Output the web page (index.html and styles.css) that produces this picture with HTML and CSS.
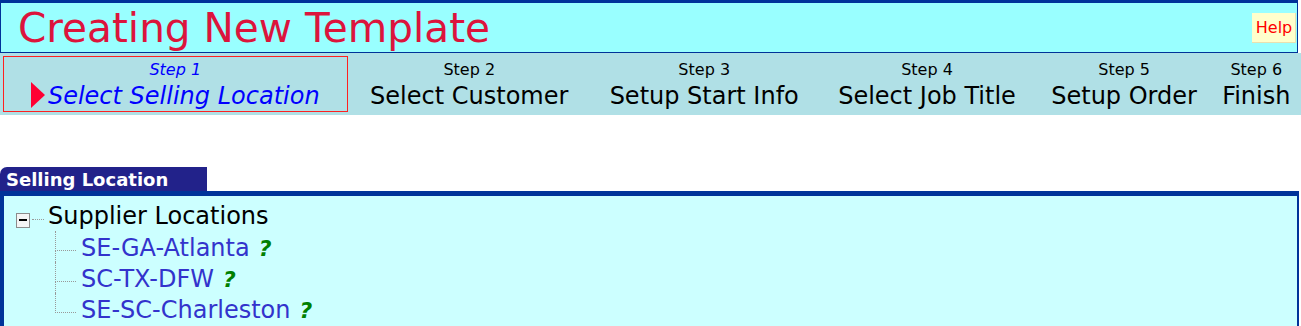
FILE: index.html
```html
<!DOCTYPE html>
<html>
<head>
<meta charset="utf-8">
<title>Creating New Template</title>
<link rel="stylesheet" href="styles.css">
</head>
<body>
<div class="header">
  <div class="title">Creating New Template</div>
  <div class="help">Help</div>
</div>
<table class="steps">
  <tr>
    <td class="step current">
      <div class="num">Step 1</div>
      <div class="label"><span class="arrow"></span>Select Selling Location</div>
    </td>
    <td class="step">
      <div class="num">Step 2</div>
      <div class="label">Select Customer</div>
    </td>
    <td class="step">
      <div class="num">Step 3</div>
      <div class="label">Setup Start Info</div>
    </td>
    <td class="step">
      <div class="num">Step 4</div>
      <div class="label">Select Job Title</div>
    </td>
    <td class="step">
      <div class="num">Step 5</div>
      <div class="label">Setup Order</div>
    </td>
    <td class="step">
      <div class="num">Step 6</div>
      <div class="label">Finish</div>
    </td>
  </tr>
</table>
<div class="section">
  <div class="tab">Selling Location</div>
  <div class="panel">
    <div class="tree-root">
      <span class="toggle"></span><span class="root-dots"></span><span class="root-label">Supplier Locations</span>
    </div>
    <ul class="children">
      <li class="child"><span class="link">SE-GA-Atlanta</span><span class="q">?</span></li>
      <li class="child"><span class="link">SC-TX-DFW</span><span class="q">?</span></li>
      <li class="child last"><span class="link">SE-SC-Charleston</span><span class="q">?</span></li>
    </ul>
  </div>
</div>
</body>
</html>
```
FILE: styles.css
```css
html, body {
  margin: 0;
  padding: 0;
  background: #ffffff;
  font-family: "DejaVu Sans", Verdana, sans-serif;
}

.header {
  width: 1296px;
  height: 49px;
  background: #99ffff;
  border-top: 3px solid #003399;
  border-left: 1px solid #003399;
  border-right: 1px solid #003399;
  border-bottom: 1px solid #003399;
  display: flex;
  justify-content: space-between;
  align-items: flex-start;
}

.title {
  color: #dc143c;
  font-size: 40.6px;
  line-height: 47px;
  padding-top: 2px;
  padding-left: 17px;
  white-space: nowrap;
}

.help {
  margin-top: 10px;
  margin-right: 1px;
  width: 44px;
  height: 30px;
  line-height: 30px;
  text-align: center;
  background: #ffffcc;
  color: #ff0000;
  font-size: 16px;
  box-shadow: inset -1px -1px 0 #e8e0b0;
}

.steps {
  width: 100%;
  background: #b0e0e6;
  border-spacing: 3px;
}

.step {
  text-align: center;
  vertical-align: top;
  white-space: nowrap;
  padding: 3px 0 1px 0;
  border: 1px solid transparent;
  color: #000000;
}

.step .num {
  font-size: 16px;
  line-height: 19px;
}

.step .label {
  font-size: 24px;
  line-height: 28px;
  margin-top: 3px;
}

.step.current {
  border: 1px solid #ff2020;
  outline: 1px solid #ff2020;
  outline-offset: -1px;
  color: #0000ff;
  font-style: italic;
}

.arrow {
  display: inline-block;
  width: 0;
  height: 0;
  border-left: 14px solid #ff0033;
  border-top: 13.5px solid transparent;
  border-bottom: 13.5px solid transparent;
  vertical-align: -4px;
  margin-right: 3px;
}

.section {
  margin-top: 52px;
}

.tab {
  width: 201px;
  height: 24px;
  line-height: 25px;
  padding-left: 6px;
  background: #22228a;
  color: #ffffff;
  font-weight: bold;
  font-size: 18px;
  border-top-left-radius: 7px;
  white-space: nowrap;
}

.panel {
  width: 1293px;
  height: 200px;
  background: #ccffff;
  border-top: 5px solid #003399;
  border-left: 4px solid #003399;
  border-right: 2px solid #003399;
  padding-top: 4px;
}

.tree-root {
  display: flex;
  align-items: center;
  height: 31px;
  padding-left: 12px;
}

.toggle {
  position: relative;
  width: 12px;
  height: 13px;
  border: 1px solid #8c8c8c;
  background: #f4f4f4;
  margin-top: 10px;
  flex: none;
}

.toggle::after {
  content: "";
  position: absolute;
  left: 2px;
  top: 5px;
  width: 8px;
  height: 2px;
  background: #000000;
}

.root-dots {
  width: 12px;
  margin-top: 8px;
  border-top: 1px dotted #999999;
  margin-left: 2px;
  margin-right: 4px;
  flex: none;
}

.root-label {
  font-size: 24px;
  color: #000000;
  white-space: nowrap;
}

.children {
  list-style: none;
  margin: 0;
  padding: 2px 0 0 51px;
}

.child {
  position: relative;
  height: 31px;
  line-height: 31px;
  padding-left: 26px;
  font-size: 24px;
  white-space: nowrap;
}

.child::before {
  content: "";
  position: absolute;
  left: 0;
  top: -2px;
  height: 19px;
  width: 20px;
  border-left: 1px dotted #999999;
  border-bottom: 1px dotted #999999;
}

.child:not(.last)::after {
  content: "";
  position: absolute;
  left: 0;
  top: 17px;
  height: 14px;
  border-left: 1px dotted #999999;
}

.link {
  color: #3333cc;
}

.q {
  color: #008000;
  font-weight: bold;
  font-style: italic;
  font-size: 22px;
  margin-left: 9px;
}
```
